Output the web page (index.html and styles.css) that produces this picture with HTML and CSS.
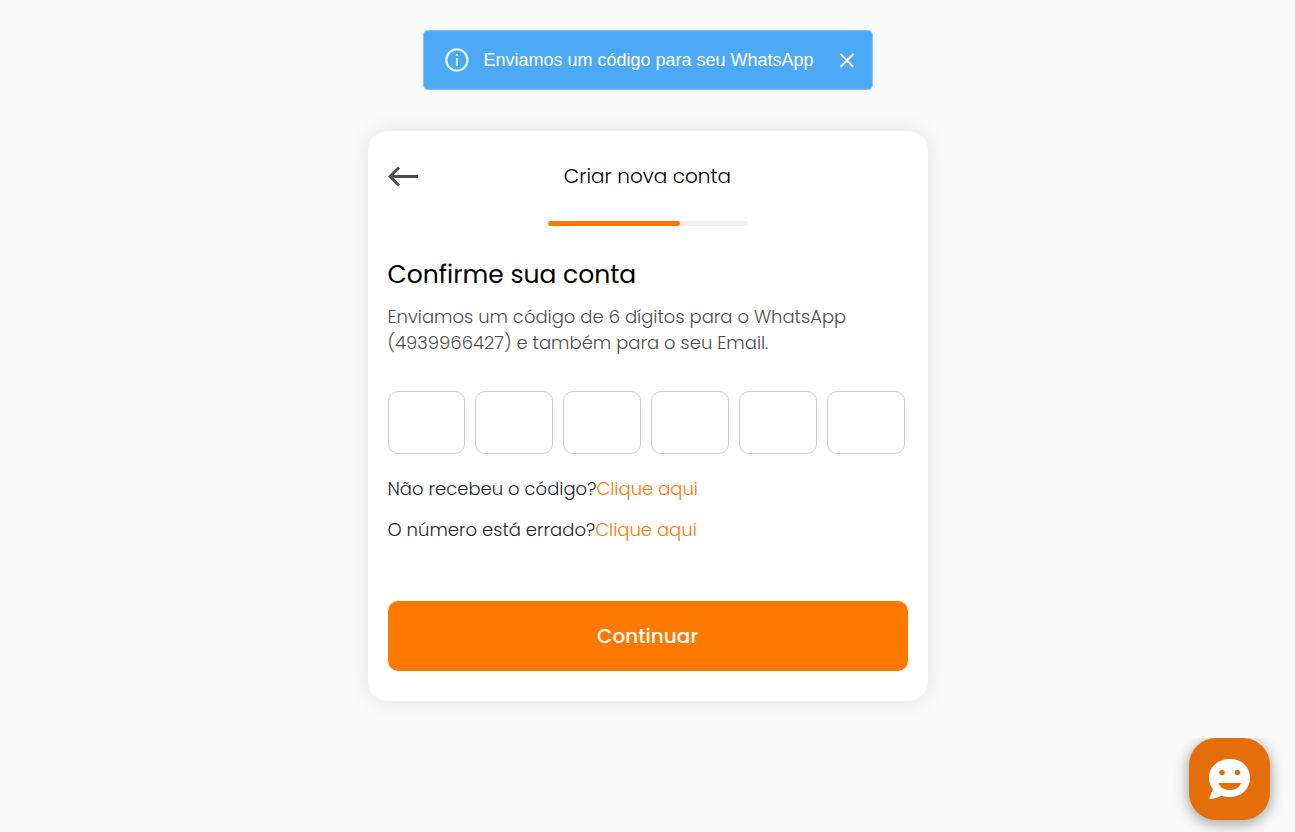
FILE: index.html
```html
<!DOCTYPE html>
<html lang="pt-BR">
<head>
<meta charset="utf-8">
<meta name="viewport" content="width=device-width, initial-scale=1">
<title>Criar nova conta</title>
<link rel="stylesheet" href="styles.css">
</head>
<body>
<div class="toast" role="status">
  <svg class="toast-icon" viewBox="0 0 24 24" aria-hidden="true"><circle cx="12" cy="12" r="10.600" fill="none" stroke="currentColor" stroke-width="2.300"/><path d="M11 6h2v2h-2zM11 10h2v8h-2z" fill="currentColor"/></svg>
  <span class="toast-text">Enviamos um código para seu WhatsApp</span>
  <button class="toast-close" type="button" aria-label="Fechar"><svg viewBox="0 0 16 16" aria-hidden="true"><path d="M1.500 2l13 13M14.500 2l-13 13" fill="none" stroke="currentColor" stroke-width="1.800"/></svg></button>
</div>
<main class="page">
  <form class="card">
    <header class="card-header">
      <button class="back" type="button" aria-label="Voltar"><svg viewBox="0 0 32 22" aria-hidden="true"><path d="M30 11.500H2M11 2.500l-9 9 9 9" fill="none" stroke="currentColor" stroke-width="3"/></svg></button>
      <h1 class="card-title">Criar nova conta</h1>
    </header>
    <div class="progress" role="progressbar" aria-label="Progresso" aria-valuenow="66" aria-valuemin="0" aria-valuemax="100"><div class="progress-value" style="width:66%"></div></div>
    <h2 class="heading">Confirme sua conta</h2>
    <p class="description">Enviamos um código de 6 dígitos para o WhatsApp (4939966427) e também para o seu Email.</p>
    <div class="code">
      <input class="digit" type="text" inputmode="numeric" maxlength="1" aria-label="Dígito 1">
      <input class="digit" type="text" inputmode="numeric" maxlength="1" aria-label="Dígito 2">
      <input class="digit" type="text" inputmode="numeric" maxlength="1" aria-label="Dígito 3">
      <input class="digit" type="text" inputmode="numeric" maxlength="1" aria-label="Dígito 4">
      <input class="digit" type="text" inputmode="numeric" maxlength="1" aria-label="Dígito 5">
      <input class="digit" type="text" inputmode="numeric" maxlength="1" aria-label="Dígito 6">
    </div>
    <p class="help">Não recebeu o código?<a class="link" href="#reenviar">Clique aqui</a></p>
    <p class="help">O número está errado?<a class="link" href="#numero">Clique aqui</a></p>
    <button class="submit" type="submit">Continuar</button>
  </form>
</main>
<div class="chat">
  <button class="chat-button" type="button" aria-label="Abrir chat"><svg viewBox="0 0 42 42" aria-hidden="true"><path d="M21 1C9 1 0 9 0 20c0 4.500 1.500 8 4 11L0 41c5 0 9.500-1.500 12.500-3.500 2.500 1 5 1.500 8 1.500 12 0 20.500-8 20.500-19S33 1 21 1z" fill="#fff"/><circle cx="13" cy="14.500" r="2.700" fill="#e46f0a"/><circle cx="28.500" cy="14.500" r="2.700" fill="#e46f0a"/><path d="M9.500 25h22.500c-1.500 4.500-6 7-11.200 7S11 29.500 9.500 25z" fill="#e46f0a"/></svg></button>
</div>
</body>
</html>
```
FILE: styles.css
```css
* { box-sizing: border-box; }
body {
  margin: 0;
  min-height: 100vh;
  background: #fafafa;
  color: #000;
  font-family: Poppins, Inter, sans-serif;
  font-weight: 300;
}
h1, h2, p { margin: 0; }
button { padding: 0; border: 0; background: none; font: inherit; cursor: pointer; }
svg { display: block; }

.toast {
  position: fixed;
  top: 30px;
  left: 50%;
  transform: translateX(-50%);
  display: flex;
  align-items: center;
  max-width: 100%;
  height: 60px;
  padding: 0 17px 0 21px;
  border: 1px solid #85c5f8;
  border-radius: 5px;
  background: #4ba9f5;
  color: #fff;
  font-family: "Liberation Sans", Arial, sans-serif;
  font-size: 18px;
  font-weight: 400;
  white-space: nowrap;
}
.toast-icon { width: 24px; height: 24px; margin-right: 15px; color: #e4f2fe; }
.toast-text { color: #fff; }
.toast-close { margin-left: 25px; color: #fff; }
.toast-close svg { width: 16px; height: 16px; }

.page { display: flex; justify-content: center; padding-top: 131px; }
.card {
  width: 100%;
  max-width: 560px;
  padding: 30px 20px;
  border-radius: 20px;
  background: #fff;
  box-shadow: 0 0 20px rgba(0, 0, 0, 0.1);
}
.card-header { display: grid; grid-template-columns: 32px 1fr 32px; align-items: center; height: 30px; }
.back { color: #4d4d4d; }
.back svg { width: 32px; height: 22px; }
.card-title { text-align: center; font-size: 20px; line-height: 30px; font-weight: 300; }
.progress { width: 200px; height: 5px; margin: 30px auto 0; border-radius: 3px; background: #efeff4; overflow: hidden; }
.progress-value { height: 5px; border-radius: 3px; background: #ff7800; }
.heading { margin-top: 30px; font-size: 25px; line-height: 38px; font-weight: 400; }
.description { max-width: 480px; margin-top: 10px; color: #4d4d4d; font-size: 18px; line-height: 26px; }
.code { display: grid; grid-template-columns: repeat(6, 1fr); gap: 10px; margin: 35px 3px 22px 0; }
.digit {
  width: 100%;
  min-width: 0;
  height: 63px;
  border: 1px solid #ccc;
  border-radius: 10px;
  background: #fff;
  text-align: center;
  font: inherit;
  font-size: 24px;
}
.help { margin-bottom: 15px; color: #212529; font-size: 18px; line-height: 26px; }
.link { color: #ff7800; text-decoration: none; }
.submit {
  display: block;
  width: 100%;
  height: 70px;
  margin-top: 58px;
  border-radius: 10px;
  background: #ff7800;
  color: #fff;
  font-size: 20px;
  font-weight: 500;
}

.chat { position: fixed; right: 0; bottom: 0; padding: 0 25px 12px; overflow: hidden; }
.chat-button {
  display: flex;
  align-items: center;
  justify-content: center;
  width: 81px;
  height: 82px;
  border-radius: 27px;
  background: #e46f0a;
  box-shadow: 0 3px 15px rgba(0, 0, 0, 0.4);
}
.chat-button svg { width: 42px; height: 42px; }
```
